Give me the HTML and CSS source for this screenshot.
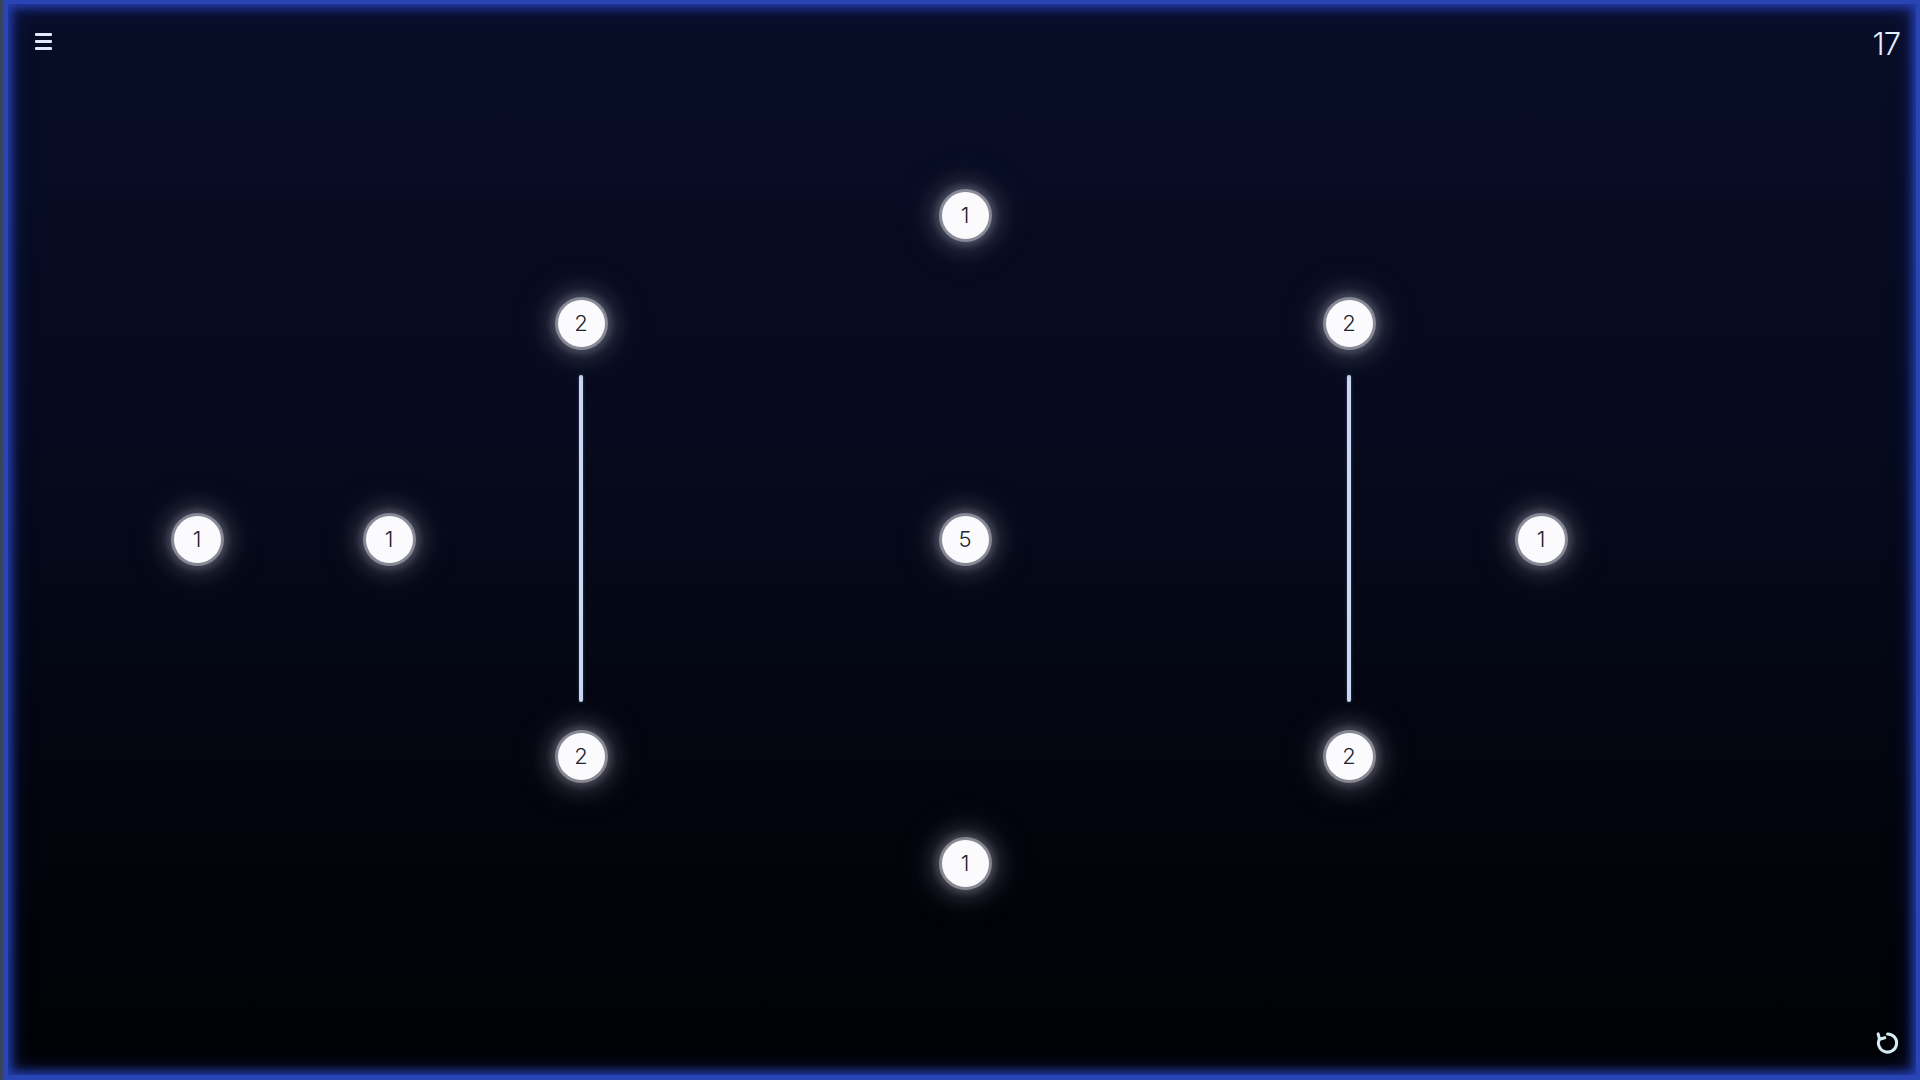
FILE: index.html
```html
<!DOCTYPE html>
<html lang="en">
<head>
<meta charset="utf-8">
<title>Bridges</title>
<link rel="stylesheet" href="styles.css">
</head>
<body>
<div class="screen">
  <div class="board">
    <div class="bridge" style="left:573px;top:371px;height:327px"></div>
    <div class="bridge" style="left:1341px;top:371px;height:327px"></div>

    <div class="node" style="left:957px;top:211px">1</div>
    <div class="node" style="left:573px;top:319px">2</div>
    <div class="node" style="left:1341px;top:319px">2</div>
    <div class="node" style="left:189px;top:535px">1</div>
    <div class="node" style="left:381px;top:535px">1</div>
    <div class="node" style="left:957px;top:535px">5</div>
    <div class="node" style="left:1533px;top:535px">1</div>
    <div class="node" style="left:573px;top:752px">2</div>
    <div class="node" style="left:1341px;top:752px">2</div>
    <div class="node" style="left:957px;top:859px">1</div>
  </div>

  <header class="topbar">
    <button class="menu" aria-label="Menu"><span></span><span></span><span></span></button>
    <div class="level">17</div>
  </header>
  <div class="spacer"></div>
  <footer class="bottombar">
    <button class="reset" aria-label="Restart">
      <svg viewBox="0 0 24 24" width="26" height="26" fill="none" stroke="#d4ecf4" stroke-width="2.8" stroke-linecap="round" stroke-linejoin="round">
        <path d="M12.5 3.6 A8.4 8.4 0 1 1 5.0 8.2"/>
        <path d="M3.8 3.6 L5.2 8.6 L10 7.2"/>
      </svg>
    </button>
  </footer>
</div>
</body>
</html>
```

FILE: styles.css
```css
html, body {
  margin: 0;
  padding: 0;
  height: 100%;
  overflow: hidden;
}

body {
  background: #38445c;
  font-family: Inter, "Liberation Sans", sans-serif;
}

.screen {
  position: relative;
  margin-left: 3px;
  height: 100vh;
  box-sizing: border-box;
  border: 4px solid #2944b4;
  border-left-width: 5px;
  border-bottom-width: 5px;
  box-shadow:
    inset 0 0 10px 4px rgba(40, 68, 190, 0.85),
    inset 0 0 22px 6px rgba(30, 50, 150, 0.35);
  background: linear-gradient(180deg, #080d27 0%, #060a1e 40%, #03050f 70%, #010204 100%);
  display: flex;
  flex-direction: column;
}

.board {
  position: absolute;
  inset: 0;
}

.bridge {
  position: absolute;
  width: 4px;
  margin-left: -2px;
  border-radius: 2px;
  background: #c9d9f4;
  box-shadow: 0 0 3px rgba(180, 200, 240, 0.35);
}

.node {
  position: absolute;
  width: 47px;
  height: 47px;
  margin-left: -23.5px;
  margin-top: -23.5px;
  border-radius: 50%;
  background: #fbfbfd;
  color: #23232c;
  font-size: 22px;
  font-weight: 300;
  display: flex;
  align-items: center;
  justify-content: center;
  box-shadow:
    0 0 0 3px rgba(205, 205, 215, 0.5),
    0 0 6px 7px rgba(150, 150, 165, 0.3),
    0 0 16px 14px rgba(110, 110, 125, 0.22),
    0 0 28px 21px rgba(80, 80, 95, 0.16);
}

.topbar {
  position: relative;
  display: flex;
  justify-content: space-between;
  align-items: flex-start;
  padding: 24px 16px 0 27px;
}

.menu {
  margin-top: 5px;
  padding: 0;
  border: 0;
  background: none;
  width: 17px;
  display: flex;
  flex-direction: column;
  gap: 4px;
  cursor: pointer;
}

.menu span {
  display: block;
  height: 3px;
  width: 17px;
  border-radius: 1px;
  background: #dfe9ff;
}

.level {
  color: #e4eeff;
  font-size: 31px;
  font-weight: 300;
  line-height: 1;
  letter-spacing: -1px;
}

.spacer {
  flex: 1;
}

.bottombar {
  position: relative;
  display: flex;
  justify-content: flex-end;
  padding: 0 16px 19px 0;
}

.reset {
  padding: 0;
  border: 0;
  background: none;
  width: 26px;
  height: 26px;
  cursor: pointer;
}

.reset svg {
  display: block;
}
```
